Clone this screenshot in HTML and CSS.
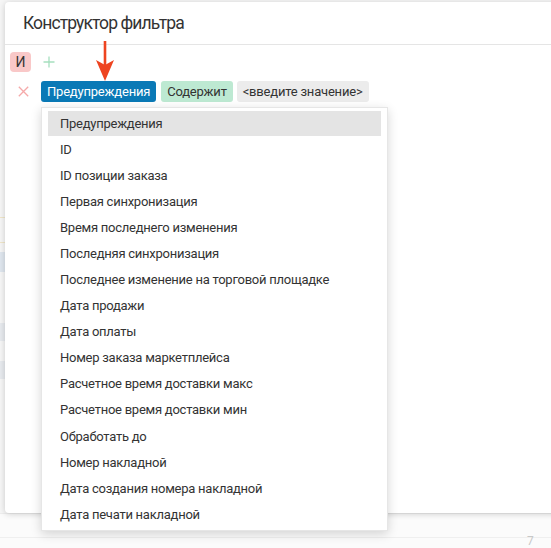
FILE: index.html
```html
<!DOCTYPE html>
<html lang="ru">
<head>
<meta charset="utf-8">
<title>Конструктор фильтра</title>
<link rel="stylesheet" href="styles.css">
</head>
<body>
<div class="page">
  <div class="bg-left">
    <span class="bg-line l1"></span>
    <span class="bg-line l2"></span>
    <span class="bg-block b1"></span>
    <span class="bg-block b2"></span>
    <span class="bg-block b3"></span>
  </div>
  <div class="bg-footer">
    <span class="bg-num">7</span>
  </div>

  <div class="modal">
    <div class="modal-header">
      <h1 class="modal-title">Конструктор фильтра</h1>
    </div>
    <div class="modal-body">
      <div class="group-row">
        <span class="chip chip-and">И</span>
        <span class="icon-btn plus">
          <svg width="12" height="12" viewBox="0 0 12 12"><path d="M6 0.5V11.5M0.5 6H11.5" stroke="#a6dfbf" stroke-width="1.3" fill="none"/></svg>
        </span>
      </div>
      <div class="cond-row">
        <span class="icon-btn remove">
          <svg width="11" height="11" viewBox="0 0 11 11"><path d="M0.8 0.8L10.2 10.2M10.2 0.8L0.8 10.2" stroke="#f5a9a9" stroke-width="1.3" fill="none"/></svg>
        </span>
        <span class="chip chip-field">Предупреждения</span>
        <span class="chip chip-op">Содержит</span>
        <span class="chip chip-value">&lt;введите значение&gt;</span>
      </div>
    </div>
  </div>

  <ul class="menu">
    <li class="menu-item active">Предупреждения</li>
    <li class="menu-item">ID</li>
    <li class="menu-item">ID позиции заказа</li>
    <li class="menu-item">Первая синхронизация</li>
    <li class="menu-item">Время последнего изменения</li>
    <li class="menu-item">Последняя синхронизация</li>
    <li class="menu-item">Последнее изменение на торговой площадке</li>
    <li class="menu-item">Дата продажи</li>
    <li class="menu-item">Дата оплаты</li>
    <li class="menu-item">Номер заказа маркетплейса</li>
    <li class="menu-item">Расчетное время доставки макс</li>
    <li class="menu-item">Расчетное время доставки мин</li>
    <li class="menu-item">Обработать до</li>
    <li class="menu-item">Номер накладной</li>
    <li class="menu-item">Дата создания номера накладной</li>
    <li class="menu-item">Дата печати накладной</li>
  </ul>

  <svg class="arrow" width="24" height="42" viewBox="0 0 24 42">
    <path d="M12 0V30" stroke="#ee4420" stroke-width="2.6" fill="none"/>
    <path d="M3 19L12 24L21 19L12 40Z" fill="#ee4420"/>
  </svg>
</div>
</body>
</html>
```

FILE: styles.css
```css
* { box-sizing: border-box; }
html, body { margin: 0; padding: 0; }
body {
  font-family: Roboto, "Liberation Sans", Arial, sans-serif;
  color: #333;
  background: #f4f4f4;
}
.page {
  position: relative;
  width: 551px;
  height: 548px;
  overflow: hidden;
  background: #f6f6f6;
}

/* faint page behind the modal */
.bg-left { position: absolute; left: 0; top: 0; width: 6px; height: 548px; }
.bg-line { position: absolute; left: 0; width: 6px; height: 1px; background: #f0e6c9; }
.l1 { top: 217px; } .l2 { top: 242px; }
.bg-block { position: absolute; left: 0; width: 6px; background: #e7eaee; }
.b1 { top: 252px; height: 20px; background: #dfe6ee; }
.b2 { top: 323px; height: 18px; }
.b3 { top: 361px; height: 18px; }
.bg-footer {
  position: absolute; left: 0; top: 513px; width: 551px; height: 35px;
  background: #fbfbfb;
  border-top: 1px solid #ededed;
}
.bg-footer::before {
  content: ""; position: absolute; left: 0; right: 0; top: 23px; height: 1px; background: #efefef;
}
.bg-num { position: absolute; left: 527px; top: 21px; font-size: 12px; line-height: 12px; color: #c8c8c8; }

/* modal */
.modal {
  position: absolute;
  left: 5px; top: 2px;
  width: 580px; height: 511px;
  background: #fff;
  border-radius: 4px;
  box-shadow: 0 1px 6px rgba(0,0,0,0.18);
}
.modal-header {
  height: 43px;
  padding: 0 18px;
  display: flex;
  align-items: center;
  border-bottom: 1px solid #e5e5e5;
}
.modal-title {
  margin: 0;
  font-size: 17.5px;
  font-weight: 400;
  color: #333;
  letter-spacing: -0.9px;
}
.modal-body {
  padding: 7px 5px;
  display: flex;
  flex-direction: column;
  gap: 9px;
}
.group-row, .cond-row {
  display: flex;
  align-items: center;
}
.group-row { gap: 12px; height: 20px; }
.cond-row { gap: 5px; height: 21px; }

.chip {
  display: inline-flex;
  align-items: center;
  font-size: 13px;
  letter-spacing: -0.2px;
  line-height: 1;
  border-radius: 3px;
  white-space: nowrap;
}
.chip-and {
  width: 21px; height: 20px;
  justify-content: center;
  background: #f9c8c8;
  color: #333;
  border-radius: 4px;
  font-size: 14px;
  letter-spacing: 0;
}
.icon-btn { display: inline-flex; align-items: center; justify-content: center; }
.plus { width: 16px; height: 20px; margin-left: -2px; }
.remove { width: 26px; height: 21px; }
.chip-field {
  height: 21px;
  padding: 0 6px;
  background: #0a79b6;
  color: #fff;
}
.chip-op {
  height: 21px;
  padding: 0 6px;
  background: #bde9d2;
  color: #333;
}
.chip-value {
  height: 21px;
  padding: 0 6px;
  background: #ececec;
  color: #333;
  margin-left: -1px;
}

/* dropdown */
.menu {
  position: absolute;
  left: 41px; top: 107px;
  width: 347px;
  margin: 0;
  padding: 3px 6px;
  list-style: none;
  background: #fff;
  border: 1px solid #e6e6e6;
  box-shadow: 0 3px 10px rgba(0,0,0,0.16);
}
.menu-item {
  height: 26.1px;
  display: flex;
  align-items: center;
  padding-left: 12px;
  font-size: 13px;
  letter-spacing: -0.25px;
  color: #333;
  white-space: nowrap;
}
.menu-item.active { background: #e4e4e4; height: 25px; }

.arrow { position: absolute; left: 93px; top: 41px; }
```
